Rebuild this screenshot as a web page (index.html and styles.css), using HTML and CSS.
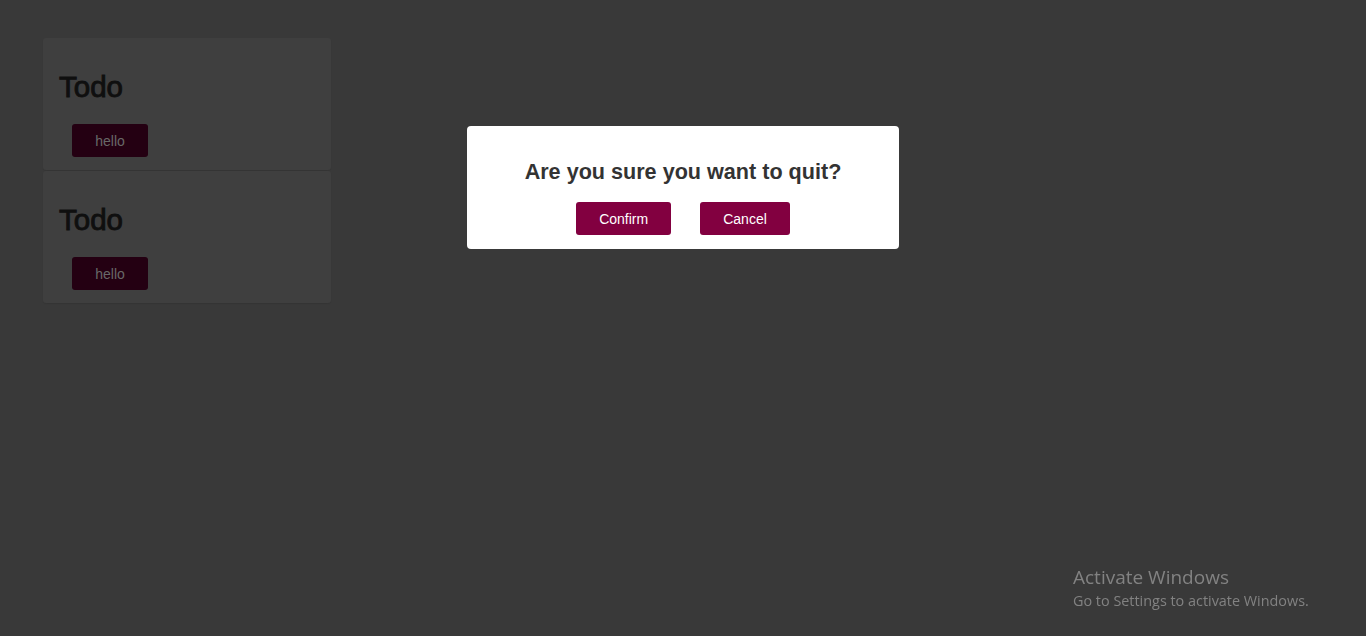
FILE: index.html
```html
<!DOCTYPE html>
<html lang="en">
<head>
<meta charset="utf-8">
<title>Todo</title>
<link rel="stylesheet" href="styles.css">
</head>
<body>
  <main class="list">
    <section class="card">
      <h1 class="card-title">Todo</h1>
      <button class="card-btn">hello</button>
    </section>
    <section class="card">
      <h1 class="card-title">Todo</h1>
      <button class="card-btn">hello</button>
    </section>
  </main>

  <div class="overlay">
    <div class="modal">
      <h2 class="modal-title">Are you sure you want to quit?</h2>
      <div class="modal-actions">
        <button class="modal-btn">Confirm</button>
        <button class="modal-btn">Cancel</button>
      </div>
    </div>
  </div>

  <div class="watermark">
    <div class="wm-title">Activate Windows</div>
    <div class="wm-sub">Go to Settings to activate Windows.</div>
  </div>
</body>
</html>
```
FILE: styles.css
```css
* { box-sizing: border-box; }
html, body { height: 100%; }
body {
  margin: 0;
  background: #393939;
  font-family: "Liberation Sans", Arial, sans-serif;
  overflow: hidden;
}
.list {
  display: flex;
  flex-direction: column;
  gap: 1px;
  padding: 38px 0 0 43px;
  width: 331px;
}
.card {
  width: 288px;
  height: 132px;
  background: #3f3f3f;
  border-radius: 3px;
  padding: 32px 16px 0 16px;
  box-shadow: 0 1px 1px rgba(0,0,0,0.08);
}
.card-title {
  margin: 0;
  font-size: 29.5px;
  line-height: 34px;
  font-weight: 400;
  -webkit-text-stroke: 0.9px #0f0f0f;
  color: #0f0f0f;
}
.card-btn {
  margin: 20px 0 0 13px;
  width: 76px;
  height: 33px;
  border: none;
  border-radius: 3px;
  background: #240012;
  color: #686868;
  font-family: "Liberation Sans", Arial, sans-serif;
  font-size: 14px;
  padding: 0;
}
.overlay {
  position: fixed;
  inset: 0;
  display: flex;
  justify-content: center;
  align-items: flex-start;
  padding-top: 126px;
}
.modal {
  width: 432px;
  height: 123px;
  background: #ffffff;
  border-radius: 4px;
  display: flex;
  flex-direction: column;
  align-items: center;
  padding-top: 34px;
}
.modal-title {
  margin: 0;
  font-size: 21.6px;
  line-height: 24px;
  font-weight: 700;
  color: #333333;
}
.modal-actions {
  display: flex;
  gap: 29px;
  margin-top: 18px;
}
.modal-btn {
  height: 33px;
  padding: 0 23px;
  border: none;
  border-radius: 3px;
  background: #820040;
  color: #ffffff;
  font-family: "Liberation Sans", Arial, sans-serif;
  font-size: 14px;
}
.watermark {
  position: fixed;
  left: 1073px;
  top: 564px;
  color: #828282;
  font-family: "Open Sans", "Noto Sans", sans-serif;
}
.wm-title {
  font-size: 19px;
  line-height: 27px;
}
.wm-sub {
  font-size: 14.4px;
  line-height: 20px;
}
```
